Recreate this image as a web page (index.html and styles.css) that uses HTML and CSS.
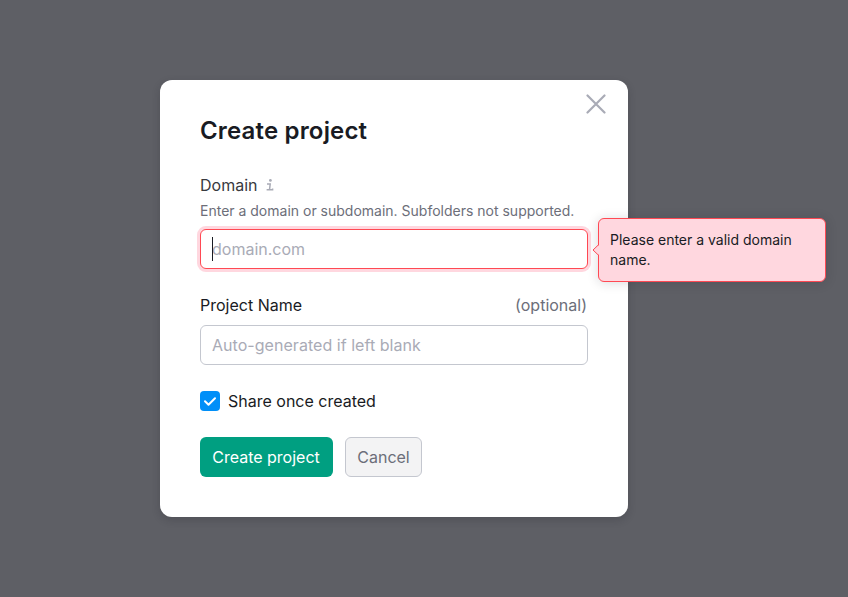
FILE: index.html
```html
<!DOCTYPE html>
<html lang="en">
<head>
<meta charset="utf-8">
<title>Create project</title>
<link rel="stylesheet" href="styles.css">
</head>
<body>
<main class="overlay">
  <form class="modal">
    <button class="close" type="button" aria-label="Close">
      <svg width="20" height="20" viewBox="0 0 20 20" fill="none" stroke="currentColor" stroke-width="2.2" stroke-linecap="round"><path d="M1.5 1.5 18.5 18.5M18.5 1.5 1.5 18.5"/></svg>
    </button>
    <h1 class="title">Create project</h1>
    <div class="field">
      <div class="label-row">
        <label class="label label-domain" for="domain">Domain</label>
        <svg class="info" width="8" height="12" viewBox="0 0 8 12" fill="none" stroke="currentColor" stroke-width="1.5"><circle cx="4.4" cy="1.4" r="1.4" fill="currentColor" stroke="none"/><path d="M1 5H4.2L3.5 10.8M.6 10.8H6.6V9.6"/></svg>
      </div>
      <p class="hint">Enter a domain or subdomain. Subfolders not supported.</p>
      <div class="control">
        <input class="input input-invalid" id="domain" type="text" placeholder="domain.com">
        <span class="caret"></span>
        <div class="tooltip" role="alert">
          <svg class="tip" width="7" height="12" viewBox="0 0 7 12"><path d="M7 0V1L1 6 7 11V12Z" fill="#ffd7df"/><path d="M6.5 0V.8L1 6 6.5 11.2V12" fill="none" stroke="#ff4953"/></svg>
          Please enter a valid domain name.
        </div>
      </div>
    </div>
    <div class="field field-name">
      <div class="label-row">
        <label class="label" for="name">Project Name</label>
        <span class="optional">(optional)</span>
      </div>
      <input class="input" id="name" type="text" placeholder="Auto-generated if left blank">
    </div>
    <div class="share">
      <span class="checkbox" role="checkbox" aria-checked="true" aria-label="Share once created">
        <svg width="20" height="20" viewBox="0 0 20 20" fill="none" stroke="#fff" stroke-width="2" stroke-linecap="round" stroke-linejoin="round"><path d="M5 10.3 8.5 13.7 15 7.3"/></svg>
      </span>
      <span>Share once created</span>
    </div>
    <div class="actions">
      <button class="button primary" type="button">Create project</button>
      <button class="button secondary" type="button">Cancel</button>
    </div>
  </form>
</main>
</body>
</html>
```
FILE: styles.css
```css
* { box-sizing: border-box; }
body {
  margin: 0;
  font-family: Inter, "Liberation Sans", sans-serif;
  font-size: 16px;
  line-height: 24px;
  color: #191b23;
}
.overlay {
  height: 597px;
  padding: 80px 0 0 160px;
  background: #5e5f65;
  overflow: hidden;
}
.modal {
  position: relative;
  width: 468px;
  height: 437px;
  padding: 37px 40px 40px;
  border-radius: 12px;
  background: #fff;
  box-shadow: 0 3px 8px rgba(25, 27, 35, .2);
}
.close {
  position: absolute;
  top: 14px;
  right: 22px;
  width: 20px;
  height: 20px;
  padding: 0;
  border: 0;
  background: none;
  color: #a9abb6;
}
.close svg { display: block; }
.title {
  margin: 0 0 28px;
  font-size: 24px;
  line-height: 28px;
  font-weight: 600;
  letter-spacing: .17px;
}
.label-row {
  display: flex;
  align-items: center;
  height: 24px;
}
.label-domain { color: #38393e; }
.info {
  margin-left: 9px;
  color: #a9abb6;
}
.hint {
  margin: 4px 0 8px;
  font-size: 14px;
  line-height: 20px;
  color: #6c6e79;
}
.control { position: relative; }
.input {
  display: block;
  width: 388px;
  height: 40px;
  padding: 0 11px;
  border: 1px solid #c4c7cf;
  border-radius: 6px;
  background: #fff;
  font: inherit;
}
.input::placeholder { color: #a9abb6; opacity: 1; }
.field-name .input { letter-spacing: .04px; }
.input-invalid {
  border-color: #ff4953;
  box-shadow: 0 0 0 3px #ffd7df;
}
.caret {
  position: absolute;
  left: 12px;
  top: 8px;
  width: 1px;
  height: 24px;
  background: #191b23;
}
.tooltip {
  position: absolute;
  left: 398px;
  top: -11px;
  width: 228px;
  height: 64px;
  padding: 11px;
  border: 1px solid #ff4953;
  border-radius: 6px;
  background: #ffd7df;
  box-shadow: 0 1px 12px rgba(25, 27, 35, .16);
  font-size: 14px;
  line-height: 20px;
}
.tip {
  position: absolute;
  left: -7px;
  top: 25px;
}
.field-name { margin-top: 24px; }
.field-name .input { margin-top: 8px; }
.optional {
  margin-left: auto;
  padding-right: 1px;
  color: #6c6e79;
}
.share {
  display: flex;
  align-items: center;
  gap: 8px;
  height: 24px;
  margin-top: 24px;
}
.checkbox {
  width: 20px;
  height: 20px;
  border-radius: 4px;
  background: #008ff8;
}
.checkbox svg { display: block; }
.actions {
  display: flex;
  gap: 12px;
  margin-top: 24px;
}
.button {
  height: 40px;
  padding: 0;
  border: 0;
  border-radius: 6px;
  font: inherit;
}
.primary {
  width: 133px;
  padding-right: 1px;
  background: #009f81;
  color: #fff;
}
.secondary {
  width: 77px;
  border: 1px solid #c4c7cf;
  background: #f3f3f4;
  color: #6c6e79;
}
```
